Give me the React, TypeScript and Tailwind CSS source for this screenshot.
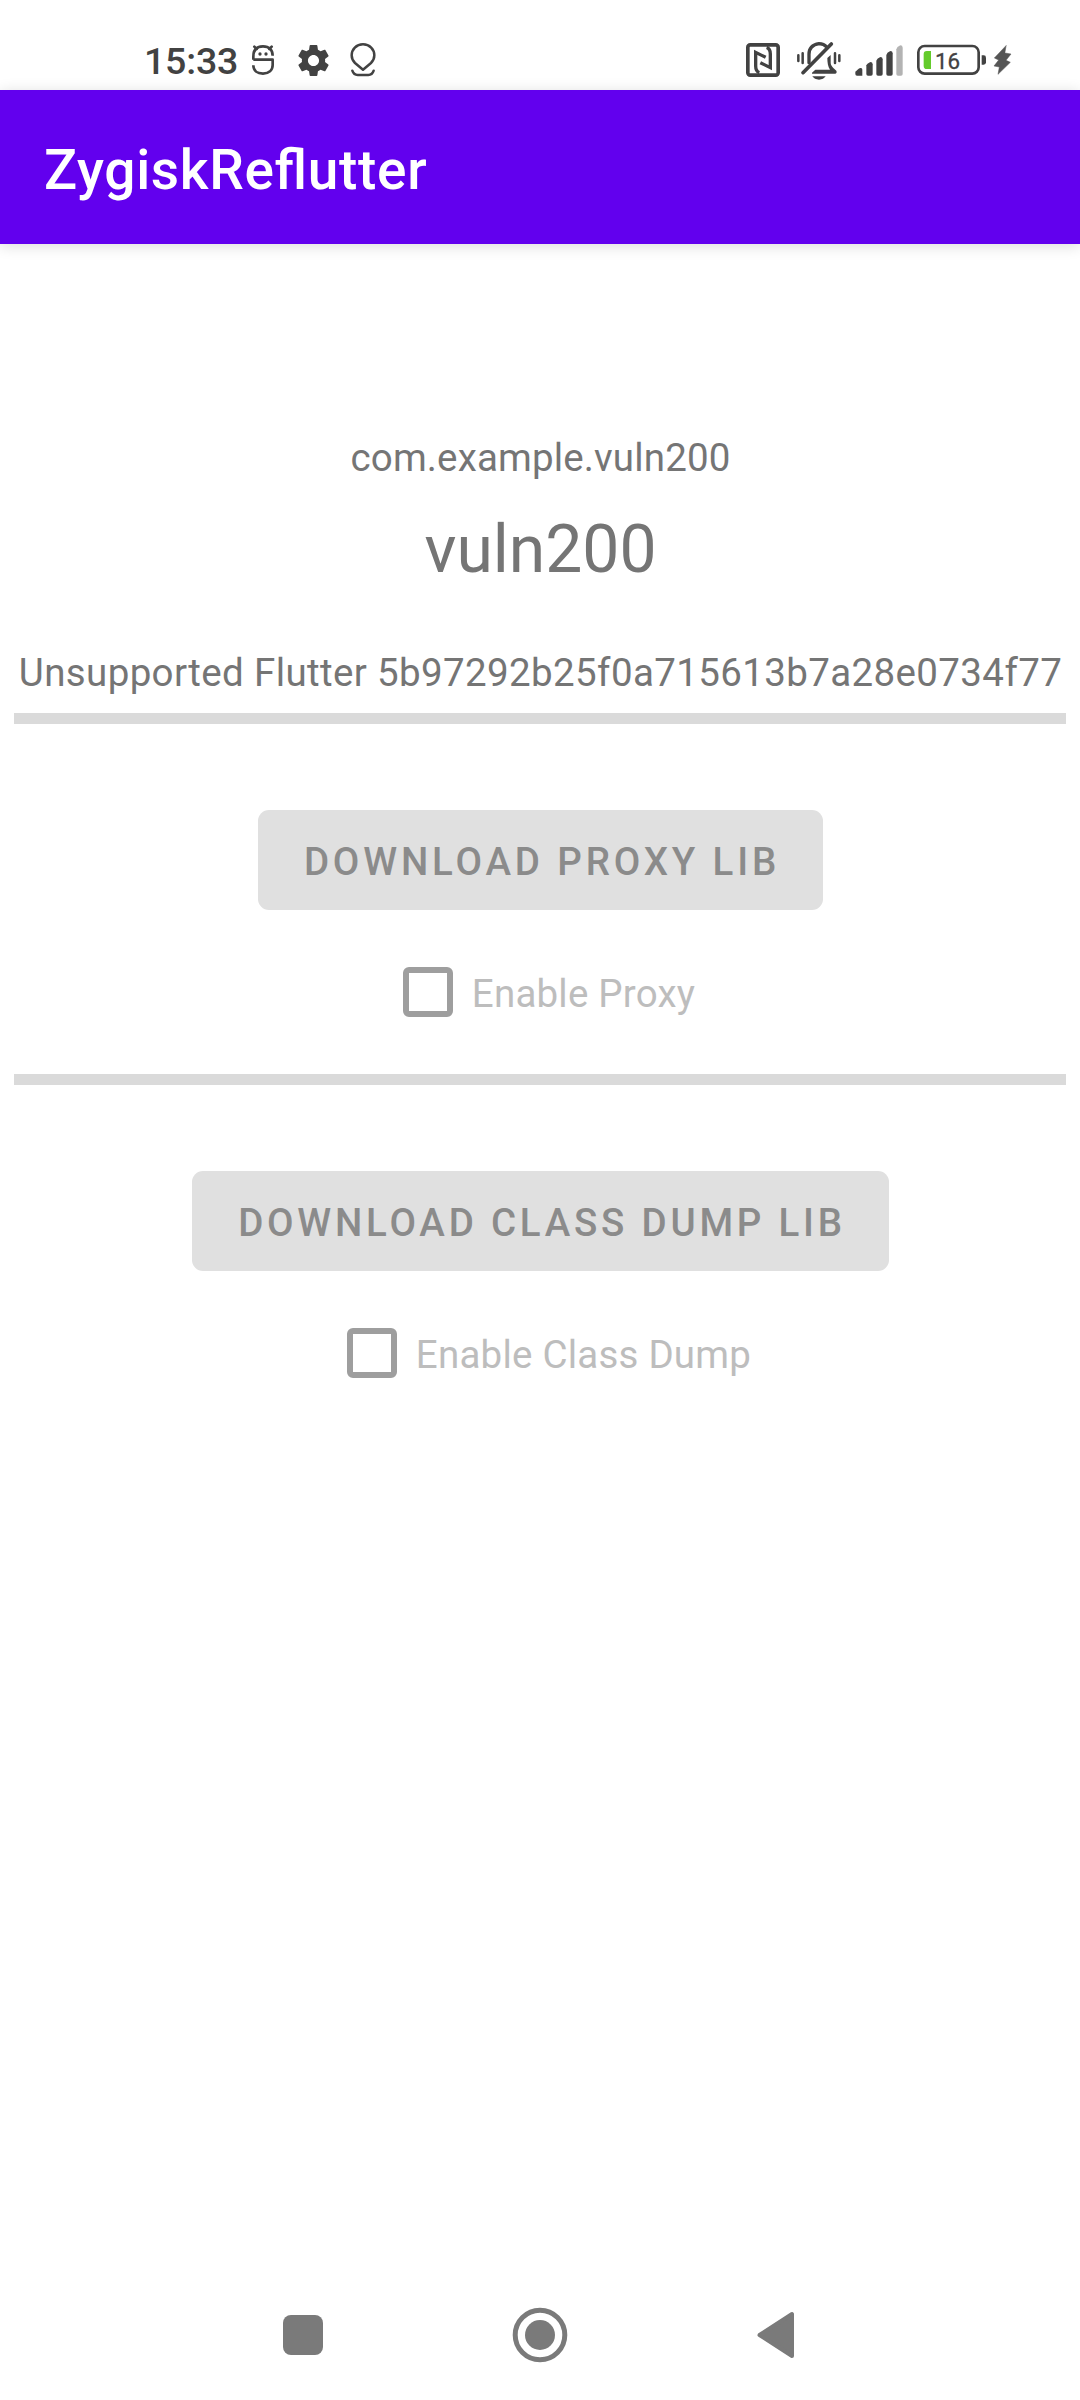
import type { ReactNode } from "react";

const INK = "#424242";

function StatusIcon({ x, w, className, children }: { x: number; w: number; className: string; children: ReactNode }) {
  return (
    <svg viewBox={`${x} 30 ${w} 120`} className={`h-10 shrink-0 ${className}`} fill="none" stroke={INK} strokeLinecap="round" strokeLinejoin="round">
      {children}
    </svg>
  );
}

function StatusBar() {
  return (
    <div className="flex h-[90px] items-center pt-[30px] pr-[68px] pl-[144px]">
      <span className="w-[106px] pt-0.5 text-[37.5px] leading-10 font-medium tracking-[-0.2px] text-[#424242]">15:33</span>
      <StatusIcon x={360} w={78} className="w-[26px]">
        <path d="M370 89V80C370 60 380 49 399 49s29 11 29 28M370 89h58v16c0 16-12 26-29 26s-29-9-29-25" strokeWidth="8" strokeLinecap="butt" />
        <path d="M373 50l7 7M425 50l-7 7" strokeWidth="8" />
        <g fill={INK} stroke="none">
          <circle cx="390" cy="72" r="5" />
          <circle cx="408" cy="72" r="5" />
        </g>
      </StatusIcon>
      <svg viewBox="2 2 20 20" className="ml-[21.5px] size-[31px] shrink-0" fill={INK}>
        <path d="M19.43 12.98c.04-.32.07-.64.07-.98s-.03-.66-.07-.98l2.11-1.65c.19-.15.24-.42.12-.64l-2-3.46c-.12-.22-.39-.3-.61-.22l-2.49 1c-.52-.4-1.08-.73-1.69-.98l-.38-2.65C14.46 2.18 14.25 2 14 2h-4c-.25 0-.46.18-.49.42l-.38 2.65c-.61.25-1.17.59-1.69.98l-2.49-1c-.23-.09-.49 0-.61.22l-2 3.46c-.13.22-.07.49.12.64l2.11 1.65c-.04.32-.07.65-.07.98s.03.66.07.98l-2.11 1.65c-.19.15-.24.42-.12.64l2 3.46c.12.22.39.3.61.22l2.49-1c.52.4 1.08.73 1.69.98l.38 2.65c.03.24.24.42.49.42h4c.25 0 .46-.18.49-.42l.38-2.65c.61-.25 1.17-.59 1.69-.98l2.49 1c.23.09.49 0 .61-.22l2-3.46c.12-.22.07-.49-.12-.64l-2.11-1.65zM12 15.6c-1.98 0-3.6-1.62-3.6-3.6s1.62-3.6 3.6-3.6 3.6 1.62 3.6 3.6-1.62 3.6-3.6 3.6z" />
      </svg>
      <StatusIcon x={657} w={87} className="ml-[20.5px] w-[29px]">
        <path d="M699 43c-20 0-34 15-34 33 0 10 4 17 10 23l24 20 24-20c6-6 10-13 10-23 0-18-14-33-34-33z" strokeWidth="7.500" />
        <path d="M667 122c3 9 8 13 16 13h32c8 0 13-4 16-13" strokeWidth="7.500" />
      </StatusIcon>
      <div className="grow" />
      <StatusIcon x={48} w={102} className="w-[34px]">
        <rect x="53.500" y="44.500" width="91" height="91" rx="7" strokeWidth="11" />
        <path d="M88 128Q77 124 77 108V67L107 82" strokeWidth="10" strokeLinecap="butt" strokeLinejoin="miter" />
        <path d="M110 52Q121 56 121 72V113L91 98" strokeWidth="10" strokeLinecap="butt" strokeLinejoin="miter" />
      </StatusIcon>
      <StatusIcon x={198} w={138} className="ml-4 w-[46px]">
        <path d="M237 98V73c0-19 11-29 30-32 10 0 18 4 23 10" strokeWidth="10" />
        <path d="M246 128l10-9h44c-6-9-8-21-8-35l10-9v22c0 11 6 15 17 25 2 3 1 9-4 9h-69z" fill={INK} stroke="none" />
        <path d="M219 128L304 42" strokeWidth="11" />
        <path d="M247 139h40c-4 6-11 10-20 10s-16-4-20-10z" fill={INK} stroke="none" />
        <path d="M218 70v29M205 76v17M315 70v29M328 76v17" strokeWidth="7.500" />
      </StatusIcon>
      <StatusIcon x={372} w={150} className="ml-3 w-[50px]">
        <g stroke="none" fill={INK}>
          <path d="M376 125l10-9c5-3 11-2 11 4v17h-16q-5 0-5-5z" />
          <path d="M409 106q1-5 12-10 7 0 7 7v29q0 5-5 5h-9q-5 0-5-5z" />
          <path d="M439 92q1-6 12-11 7 0 7 7v44q0 5-5 5h-9q-5 0-5-5z" />
          <path d="M469 75q1-7 12-12 7 0 7 7v62q0 5-5 5h-9q-5 0-5-5z" />
          <path d="M499 58q1-7 12-12 7 0 7 7v79q0 5-5 5h-9q-5 0-5-5z" fill="#b3b3b3" />
        </g>
      </StatusIcon>
      <StatusIcon x={558} w={213} className="ml-3 w-[71px]">
        <rect x="565" y="48" width="181" height="83" rx="19" strokeWidth="8" />
        <path d="M603 63h-13q-9 0-9 9v35q0 10 9 10h13z" fill="#64cb2c" stroke="none" />
        <path d="M755 76h6q7 0 7 7v14q0 7-7 7h-6z" fill={INK} stroke="none" />
        <text x="615" y="116" fontSize="67" fontFamily="Roboto, sans-serif" fill={INK} stroke={INK} strokeWidth="1">16</text>
      </StatusIcon>
      <StatusIcon x={786} w={60} className="ml-[5px] w-5">
        <path d="M828 47L793 84 806 90 792 108 808 111 804 133 841 97 828 91 843 72 825 69z" fill="#555" stroke="#555" strokeWidth="1.500" />
      </StatusIcon>
    </div>
  );
}

function Divider() {
  return <div className="h-[11px] w-[1052px] bg-[#dadada]" />;
}

function LibSection({ button, label, buttonClass, labelClass }: { button: string; label: string; buttonClass: string; labelClass: string }) {
  return (
    <section className="flex flex-col items-center">
      <Divider />
      <button disabled className={`mt-[86px] h-[100px] rounded-[11px] bg-[#e0e0e0] pt-1 pl-1 text-[38.5px] font-medium whitespace-nowrap text-[#8b8b8b] ${buttonClass}`}>
        {button}
      </button>
      <label className="mt-[57px] flex h-[50px] items-center pl-[18px]">
        <span className="size-[50px] rounded-[6px] border-[6px] border-[#9e9e9e]" />
        <span className={`ml-[19px] pt-[3px] text-[38.5px] leading-[46px] whitespace-nowrap text-[#bdbdbd] ${labelClass}`}>{label}</span>
      </label>
      <div className="h-[57px]" />
    </section>
  );
}

export default function App() {
  return (
    <div className="flex h-[2400px] w-[1080px] flex-col overflow-hidden bg-white font-[Roboto,sans-serif]">
      <StatusBar />
      <header className="flex h-[154px] shrink-0 items-center bg-[#6200ee] pb-px pl-[44px] shadow-[0_2px_14px_rgba(0,0,0,0.14)]">
        <h1 className="pt-[7px] text-[55px] leading-[64px] font-medium tracking-[0.012em] text-white [font-feature-settings:'liga'_1]">ZygiskReflutter</h1>
      </header>
      <main className="flex grow flex-col items-center text-[#757575]">
        <p className="mt-[191px] pl-px text-[38.5px] leading-[46px] tracking-[0.15px]">com.example.vuln200</p>
        <p className="mt-[30px] pl-px text-[66px] leading-[78px]">vuln200</p>
        <p className="mt-[61px] mb-[17px] pl-px text-[38.5px] leading-[46px] tracking-[0.37px] whitespace-nowrap">
          Unsupported Flutter 5b97292b25f0a715613b7a28e0734f77
        </p>
        <LibSection button="DOWNLOAD PROXY LIB" label="Enable Proxy" buttonClass="w-[565px] tracking-[3.84px]" labelClass="tracking-[0.2px]" />
        <LibSection button="DOWNLOAD CLASS DUMP LIB" label="Enable Class Dump" buttonClass="w-[697px] tracking-[3.77px]" labelClass="tracking-[0.22px]" />
      </main>
      <nav className="flex h-[130px] shrink-0 items-center pl-[282.5px]">
        <div className="size-10 rounded-[8px] bg-[#7a7a7a]" />
        <svg viewBox="0 0 56 56" className="ml-[189px] size-14" fill="none">
          <circle cx="28" cy="28" r="24.800" stroke="#7a7a7a" strokeWidth="5" />
          <circle cx="28" cy="28" r="15" fill="#7a7a7a" />
        </svg>
        <svg viewBox="0 0 40 48" className="ml-[188px] h-12 w-10" fill="#7a7a7a" stroke="#7a7a7a" strokeWidth="4" strokeLinejoin="round">
          <path d="M3.500 24L36 3v42z" />
        </svg>
      </nav>
    </div>
  );
}
